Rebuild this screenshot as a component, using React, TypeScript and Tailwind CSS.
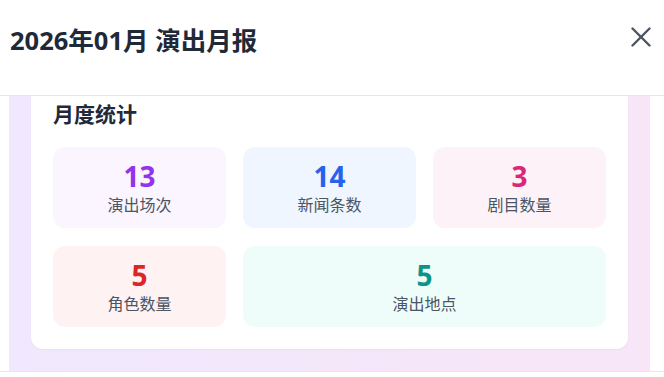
import React from "react";

const stats = [
  { n: "13", label: "演出场次", bg: "bg-[#faf5ff]", fg: "text-[#9333ea]", span: "" },
  { n: "14", label: "新闻条数", bg: "bg-[#eff6ff]", fg: "text-[#2563eb]", span: "" },
  { n: "3", label: "剧目数量", bg: "bg-[#fdf2f8]", fg: "text-[#db2777]", span: "" },
  { n: "5", label: "角色数量", bg: "bg-[#fef2f2]", fg: "text-[#dc2626]", span: "" },
  { n: "5", label: "演出地点", bg: "bg-[#effdfa]", fg: "text-[#0d9488]", span: "col-span-2" },
];

export default function App() {
  return (
    <div
      className="w-[664px] h-[377px] bg-white overflow-hidden flex flex-col"
      style={{ fontFamily: '"Noto Sans", "Noto Sans CJK SC", sans-serif' }}
    >
      <div className="h-[96px] shrink-0 border-b border-[#e5e7eb] flex items-start justify-between pl-[10px] pr-[13px] pt-[23px]">
        <h1 className="text-[25.5px] leading-[34px] font-bold text-[#1f2937]">2026年01月 演出月报</h1>
        <button className="mt-[4px] text-[#4b5563]">
          <svg width="20" height="20" viewBox="0 0 20 20" fill="none" stroke="currentColor" strokeWidth="2.4" strokeLinecap="round">
            <path d="M1.5 1.5 18.5 18.5" />
            <path d="M18.5 1.5 1.5 18.5" />
          </svg>
        </button>
      </div>
      <div className="h-[275px] shrink-0 pl-[9px] pr-[14px]">
        <div className="h-full bg-gradient-to-r from-[#f0e8fe] to-[#f8e6f7] px-[22px] pb-[22px]">
          <div className="bg-white rounded-b-xl px-[22px] pt-[3px] pb-[22px] shadow-[0_1px_2px_rgba(0,0,0,0.04)]">
            <h2 className="text-[21px] leading-[30px] font-bold text-[#1f2937] mb-[18px]">月度统计</h2>
            <div className="grid grid-cols-3 gap-x-[17px] gap-y-[18px]">
              {stats.map((s, i) => (
                <div
                  key={i}
                  className={`${s.bg} ${s.span} h-[81px] rounded-xl flex flex-col items-center justify-center`}
                >
                  <div className={`${s.fg} text-[28px] leading-[34px] font-bold`}>{s.n}</div>
                  <div className="text-[#4b5563] text-[16px] leading-[24px]">{s.label}</div>
                </div>
              ))}
            </div>
          </div>
        </div>
      </div>
      <div className="flex-1 border-t border-[#e5e7eb] bg-white" />
    </div>
  );
}
